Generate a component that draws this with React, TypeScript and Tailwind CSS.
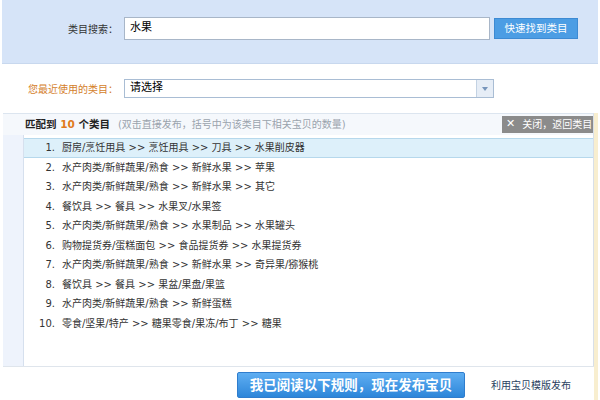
import React from "react";

const rows = [
  "厨房/烹饪用具 >> 烹饪用具 >> 刀具 >> 水果削皮器",
  "水产肉类/新鲜蔬果/熟食 >> 新鲜水果 >> 苹果",
  "水产肉类/新鲜蔬果/熟食 >> 新鲜水果 >> 其它",
  "餐饮具 >> 餐具 >> 水果叉/水果签",
  "水产肉类/新鲜蔬果/熟食 >> 水果制品 >> 水果罐头",
  "购物提货券/蛋糕面包 >> 食品提货券 >> 水果提货券",
  "水产肉类/新鲜蔬果/熟食 >> 新鲜水果 >> 奇异果/猕猴桃",
  "餐饮具 >> 餐具 >> 果盆/果盘/果篮",
  "水产肉类/新鲜蔬果/熟食 >> 新鲜蛋糕",
  "零食/坚果/特产 >> 糖果零食/果冻/布丁 >> 糖果",
];

export default function App() {
  return (
    <div className="w-[600px] h-[400px] bg-white overflow-hidden flex flex-col font-['DejaVu_Sans','Noto_Sans_CJK_SC',sans-serif] text-[#333]">
      {/* Search panel */}
      <div className="mx-[2px] h-[64px] shrink-0 bg-[#d6e4f8] border-b border-[#c8d8ee] flex items-start pt-[17px]">
        <div className="w-[116px] h-[23px] flex items-center justify-end text-[10px] text-[#333] font-['Noto_Sans_CJK_SC',sans-serif]">
          类目搜索：
        </div>
        <div className="ml-[6px] w-[366px] h-[23px] bg-white border border-[#a8b6c8] flex items-center pl-[5px] text-[11px] text-black">
          水果
        </div>
        <button className="ml-[4px] mt-[1px] w-[84px] h-[21px] bg-[#4c9de4] border border-[#3d8ad3] text-white text-[10.5px] flex items-center justify-center">
          快速找到类目
        </button>
      </div>

      {/* Recent categories */}
      <div className="mt-[15px] h-[19px] shrink-0 flex items-center">
        <div className="ml-[2px] w-[116px] text-right text-[10px] text-[#d47e2a] font-['Noto_Sans_CJK_SC',sans-serif]">
          您最近使用的类目：
        </div>
        <div className="ml-[6px] w-[370px] h-[19px] bg-white border border-[#a9bdd4] flex items-center">
          <span className="flex-1 pl-[5px] text-[11px] text-black">请选择</span>
          <span className="w-[17px] h-full bg-[#e6edf6] border-l border-[#c3d2e3] flex items-center justify-center">
            <span className="w-0 h-0 border-l-[3px] border-r-[3px] border-t-[4px] border-l-transparent border-r-transparent border-t-[#7795bb]" />
          </span>
        </div>
      </div>

      {/* Results */}
      <div className="mt-[15px] ml-[3px] w-[595px] flex-1 flex flex-col border-r-[4px] border-[#f8eecf]">
        <div className="h-[22px] shrink-0 bg-[#f5f8fc] border-t border-[#dce5ef] border-r border-r-[#d8dfe8] flex items-center pl-[22px]">
          <span className="text-[10.5px] font-bold text-[#222]">
            匹配到 <span className="text-[#e07b1c]">10</span> 个类目
          </span>
          <span className="ml-[8px] text-[10px] text-[#9aa3ad]">
            (双击直接发布，括号中为该类目下相关宝贝的数量)
          </span>
          <span className="ml-auto h-[17px] w-[91px] bg-[#8b8b8b] text-white text-[10px] flex items-center pl-[4px]">
            <span className="font-bold text-[11px] mr-[7px]">✕</span>
            关闭，返回类目
          </span>
        </div>

        <div className="h-[232px] shrink-0 flex border-b border-[#dfe5ec]">
          <div className="w-[21px] bg-[#eef3fc] border-r border-[#d6e0ee]" />
          <div className="flex-1 pt-[3px] border-r border-[#d8dfe8]">
            {rows.map((r, i) => (
              <div
                key={i}
                className={
                  i === 0
                    ? "h-[19.5px] flex items-center text-[10px] bg-[#ddf0fa] border-y border-[#b6d8ec]"
                    : "h-[19.5px] flex items-center text-[10px]"
                }
              >
                <span className="w-[31px] text-right">{i + 1}.</span>
                <span className="ml-[7px] whitespace-pre">{r}</span>
              </div>
            ))}
          </div>
        </div>

        {/* Footer */}
        <div className="flex-1 flex items-start pt-[5px]">
          <button className="ml-[234px] w-[228px] h-[26px] rounded-[2px] bg-gradient-to-b from-[#5eaef2] to-[#2c86d9] border border-[#2f7dcd] text-white text-[13.5px] font-bold flex items-center justify-center">
            我已阅读以下规则，现在发布宝贝
          </button>
          <span className="ml-[26px] mt-[6px] text-[10px] text-[#2a3f5f]">
            利用宝贝模版发布
          </span>
        </div>
      </div>
    </div>
  );
}
